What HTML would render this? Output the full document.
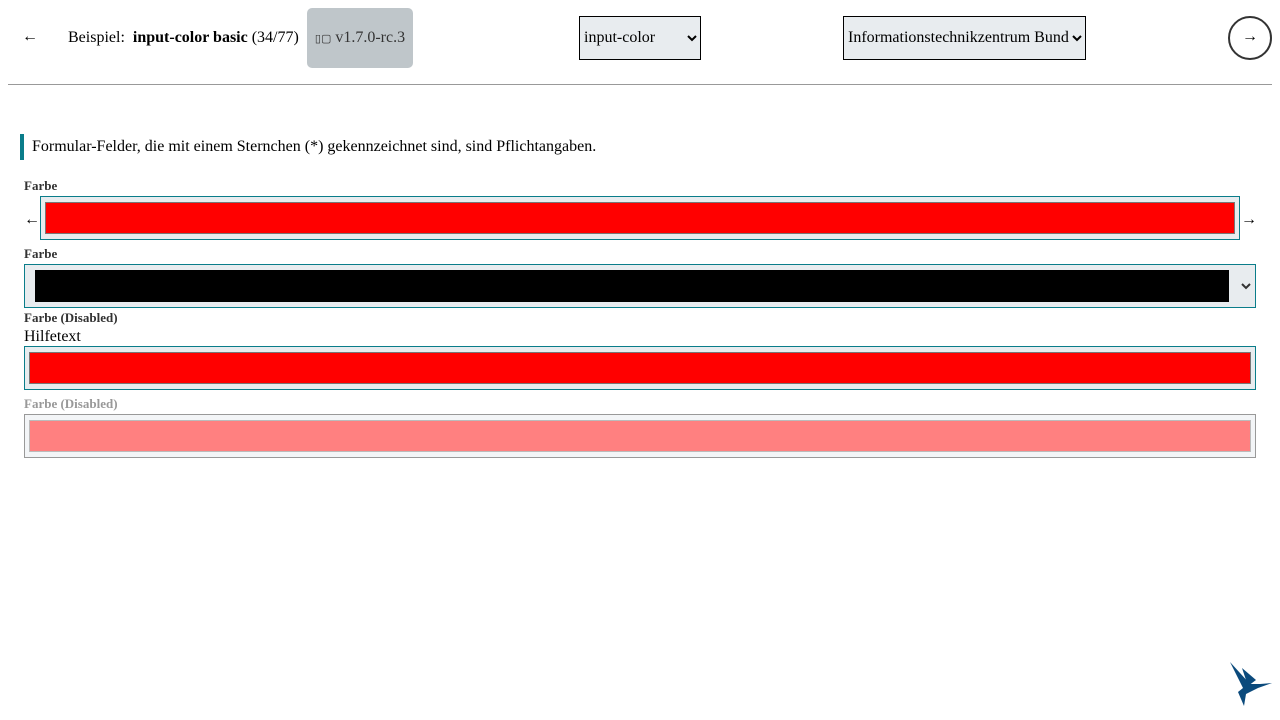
<!DOCTYPE html>
<html><head><meta charset="utf-8"><style>
body{margin:0;width:1280px;height:720px;background:#fff;font-family:"Liberation Serif",serif;position:relative;overflow:hidden;color:#000}
.abs{position:absolute}
.lbl{position:absolute;left:24px;font-weight:bold;font-size:13px;color:#333}
.box{position:absolute;background:#e8ecef;border:1px solid #0a7d8a;box-sizing:border-box}
.sw{position:absolute;box-sizing:border-box}
.chev{position:absolute}
</style></head><body>
<div class="abs" style="left:22px;top:28px;font-size:16px">←</div>
<div class="abs" style="left:68px;top:29px;font-size:16px">Beispiel:&nbsp; <b>input-color basic</b> (34/77)</div>
<div class="abs" style="left:307px;top:8px;width:106px;height:60px;background:#bfc6ca;border-radius:5px;font-size:16px;color:#333;line-height:60px;text-align:center"><span style="font-size:11px">▯▢</span> v1.7.0-rc.3</div>
<div class="abs" style="left:579px;top:16px;width:122px;height:44px;border:1px solid #000;box-sizing:border-box;background:#e8ecef;font-size:16px;line-height:42px;padding-left:4px">input-color</div>
<svg class="chev" style="left:687px;top:34px" width="10" height="8" viewBox="0 0 10 8"><path d="M1 2 L5 6 L9 2" stroke="#000" stroke-width="2" fill="none"/></svg>
<div class="abs" style="left:843px;top:16px;width:243px;height:44px;border:1px solid #000;box-sizing:border-box;background:#e8ecef;font-size:16px;line-height:42px;padding-left:4px">Informationstechnikzentrum Bund</div>
<svg class="chev" style="left:1072px;top:34px" width="10" height="8" viewBox="0 0 10 8"><path d="M1 2 L5 6 L9 2" stroke="#000" stroke-width="2" fill="none"/></svg>
<div class="abs" style="left:1228px;top:16px;width:44px;height:44px;border:2px solid #333;border-radius:50%;box-sizing:border-box;text-align:center;line-height:38px;font-size:16px">→</div>
<div class="abs" style="left:8px;top:84px;width:1264px;height:1px;background:#999"></div>
<div class="abs" style="left:20px;top:134px;width:4px;height:26px;background:#0a7d8a"></div>
<div class="abs" style="left:32px;top:138px;font-size:16px">Formular-Felder, die mit einem Sternchen (*) gekennzeichnet sind, sind Pflichtangaben.</div>
<div class="lbl" style="top:178px">Farbe</div>
<div class="abs" style="left:24px;top:211px;font-size:16px">←</div>
<div class="box" style="left:40px;top:196px;width:1200px;height:44px"></div>
<div class="sw" style="left:45px;top:202px;width:1190px;height:32px;background:red;border:1px solid #777"></div>
<div class="abs" style="left:1241px;top:211px;font-size:16px">→</div>
<div class="lbl" style="top:246px">Farbe</div>
<div class="box" style="left:24px;top:264px;width:1232px;height:44px"></div>
<div class="sw" style="left:35px;top:270px;width:1194px;height:32px;background:#000"></div>
<svg class="chev" style="left:1241px;top:282px" width="10" height="8" viewBox="0 0 10 8"><path d="M1 2 L5 6 L9 2" stroke="#333" stroke-width="2" fill="none"/></svg>
<div class="lbl" style="top:310px">Farbe (Disabled)</div>
<div class="abs" style="left:24px;top:328px;font-size:16px">Hilfetext</div>
<div class="box" style="left:24px;top:346px;width:1232px;height:44px"></div>
<div class="sw" style="left:29px;top:352px;width:1222px;height:32px;background:red;border:1px solid #777"></div>
<div class="lbl" style="top:396px;color:#999">Farbe (Disabled)</div>
<div class="box" style="left:24px;top:414px;width:1232px;height:44px;border-color:#999;background:#f3f5f7"></div>
<div class="sw" style="left:29px;top:420px;width:1222px;height:32px;background:#ff8080;border:1px solid #bbb"></div>
<svg class="abs" style="left:1226px;top:658px" width="48" height="50" viewBox="0 0 48 50">
<path d="M4 4 L24 26 L20 36 Z" fill="#0b4a7c"/><path d="M16 10 L30 22 L22 28Z" fill="#0b4a7c"/>
<path d="M22 26 L34 26 L46 25 L32 30 L20 36 L18 48 L12 34Z" fill="#0b4a7c"/></svg>
</body></html>
